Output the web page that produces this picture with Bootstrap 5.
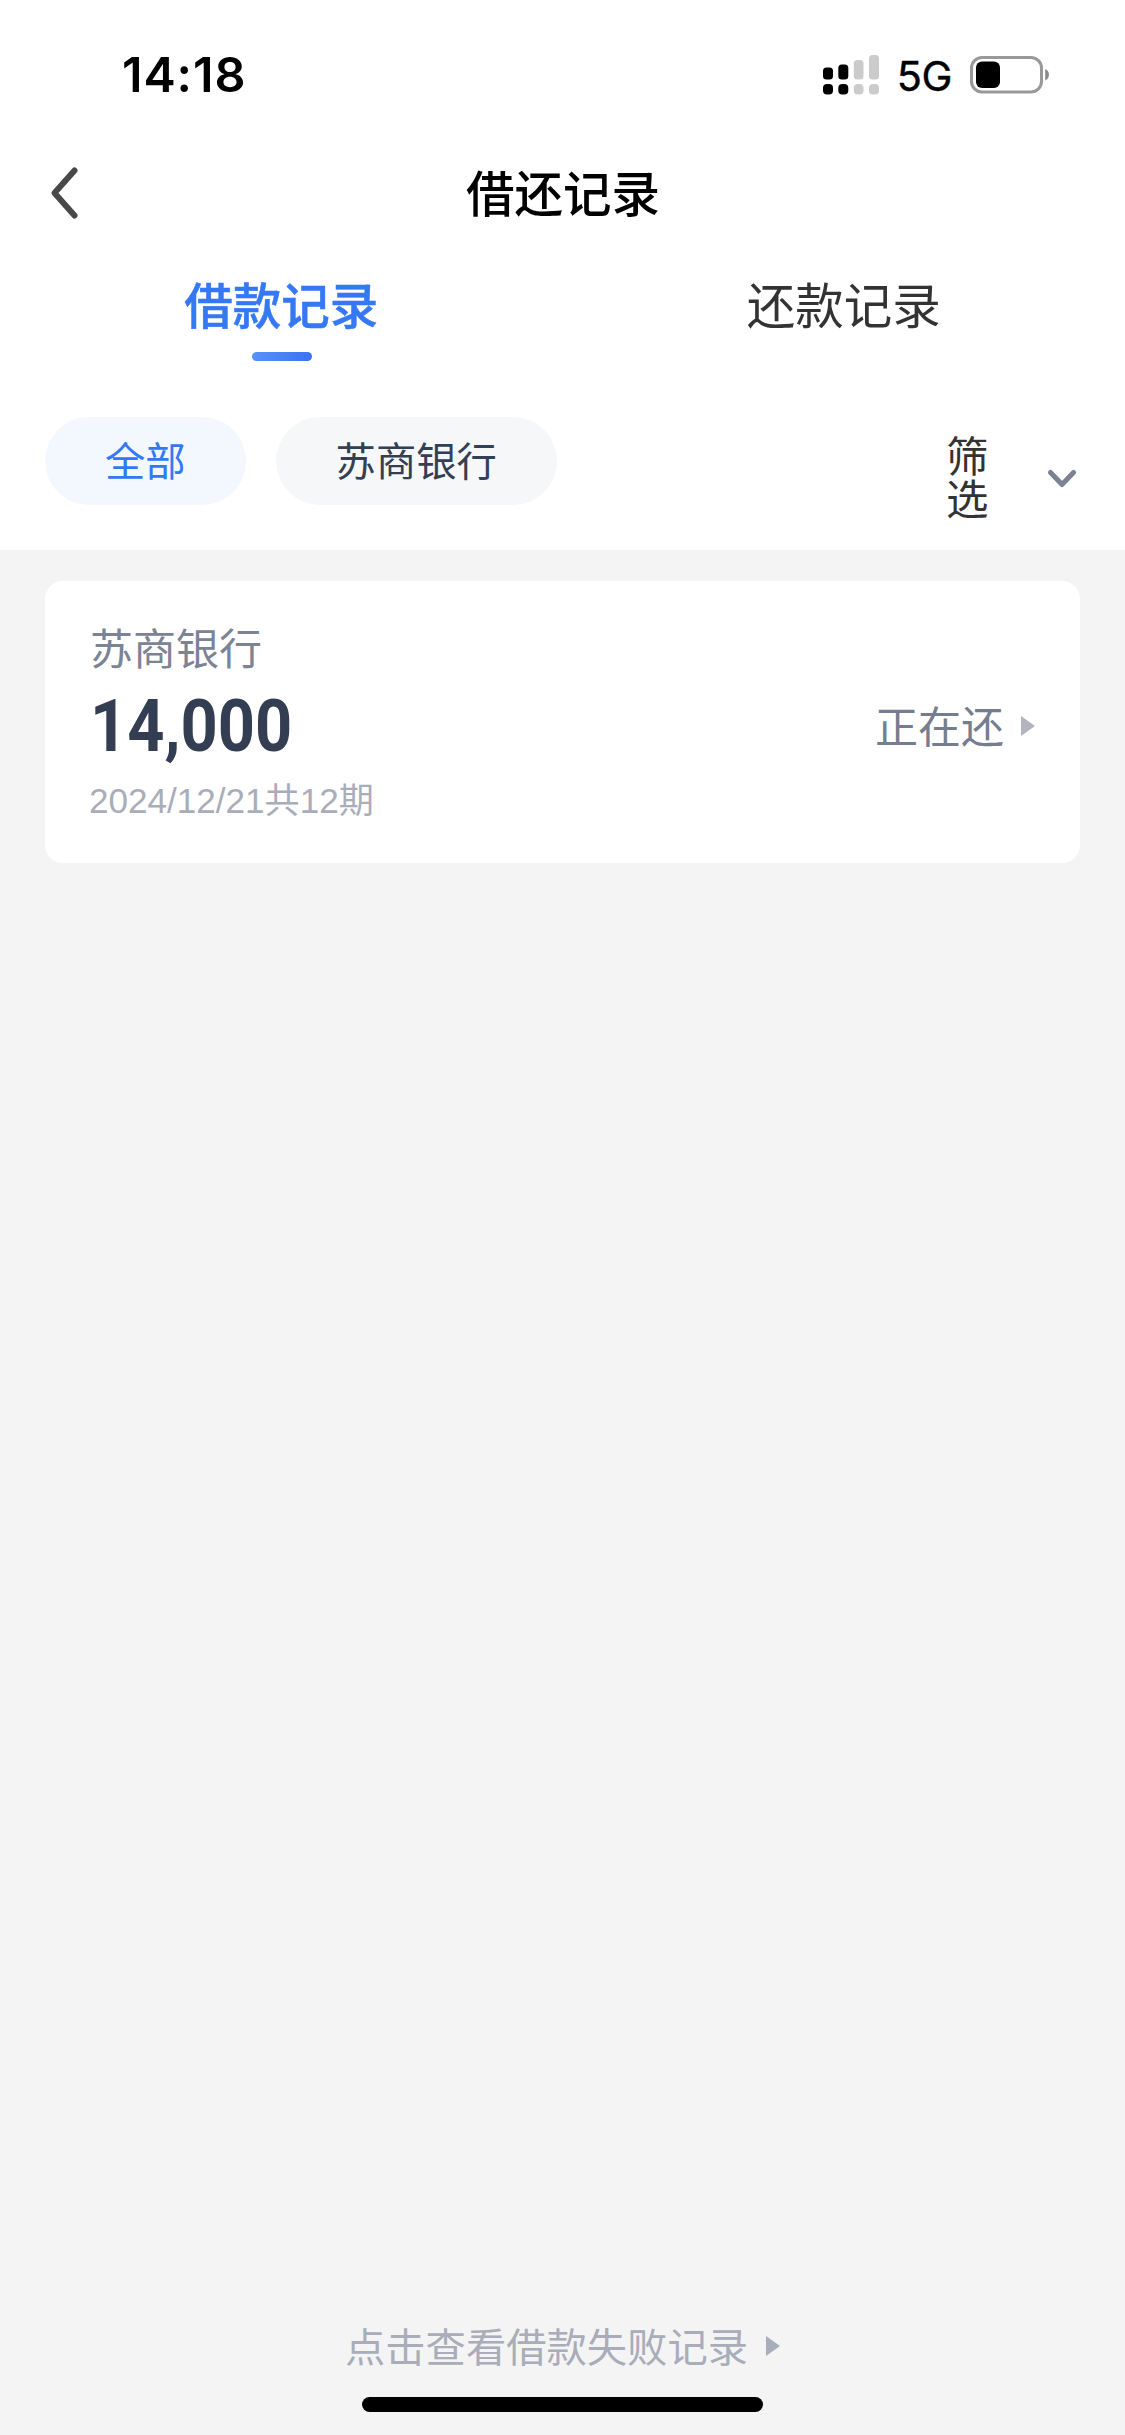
<!DOCTYPE html>
<html lang="zh-CN">
<head>
<meta charset="utf-8">
<meta name="viewport" content="width=device-width, initial-scale=1">
<title>借还记录</title>
<link href="https://cdn.jsdelivr.net/npm/bootstrap@5.3.0/dist/css/bootstrap.min.css" rel="stylesheet">
<style>
body{font-family:"Noto Sans CJK SC",sans-serif;background:#f4f4f4;color:#333;line-height:1}
svg{display:block;flex:none}
.screen{height:2435px}
.head-area{height:550px}
.status{height:150px;padding:0 75px 0 122px}
.clock{font:600 48.5px/1 Inter,sans-serif;color:#000;letter-spacing:.9px;padding-top:1px}
.net{font:400 41.5px/1 Inter,sans-serif;-webkit-text-stroke:.4px #000;color:#000;letter-spacing:-.5px;margin:3px 18px 0 18px}
.titlebar{height:86px;padding:0 49px 0 50px}
.page-title{font-size:48.5px;font-weight:500;color:#000;line-height:82px;height:86px}
.side{width:30px}
.tabs-row{height:140px}
.tab-btn{font-size:48.5px;line-height:60px;padding-top:37px;color:#333}
.tab-on{font-weight:500;-webkit-text-stroke:.5px #3478f6;color:#3478f6}
.tab-line{width:60px;height:9px;border-radius:5px;margin:19px 0 0 2px;background:linear-gradient(100deg,#5693f9,#3b71f1)}
.filters{padding:41px 45px 0;gap:30px}
.pill{height:88px;border-radius:44px;padding:0 60px;font-size:40.3px;line-height:84px;background:#f6f7f9;color:#343f54}
.pill-on{background:#f3f7fe;color:#3478f6}
.pick{padding:15px 3px 0 0;gap:58px}
.pick-text{width:43px;font-size:42.5px;line-height:43px}
.pick svg{margin-top:7px}
.loan{margin:31px 45px 0;height:282px;border-radius:18px;padding:0 45px 0 45px}
.bank{font-size:43px;line-height:60px;color:#7c8394;padding-top:35px}
.amount{font:700 73px/72px Roboto,sans-serif;color:#333e53;transform:scaleX(.89);transform-origin:left;margin-top:14px}
.due{font-family:"Liberation Sans","Noto Sans CJK SC",sans-serif;font-size:35.1px;line-height:44px;color:#a9adba;margin:17px 0 0 -1px}
.state{font-size:43px;line-height:60px;color:#757d90;gap:17px;padding-top:4px}
.state svg{margin-top:4px}
.failed{font-size:40.3px;line-height:60px;color:#a9adb9;gap:18px;margin-bottom:22px}
.failed svg{margin-top:2px}
.homebar{width:401px;height:15px;border-radius:8px;background:#000;margin-bottom:23px}
</style>
</head>
<body>
<div class="screen d-flex flex-column">
  <header class="head-area bg-white">
    <div class="status d-flex align-items-center justify-content-between">
      <span class="clock">14:18</span>
      <div class="d-flex align-items-center">
        <svg width="56" height="40" viewBox="0 0 56 40"><g fill="#000"><rect y="12.500" width="10" height="12" rx="3.500"/><rect y="29" width="10" height="10.500" rx="4"/><rect x="15.300" y="9.500" width="10" height="15" rx="3.500"/><rect x="15.300" y="29" width="10" height="10.500" rx="4"/></g><g fill="#cbcbcb"><rect x="30.800" y="5" width="9.700" height="19.500" rx="3.500"/><rect x="30.800" y="29" width="9.700" height="10.500" rx="4"/><rect x="46" y="0" width="10" height="24.500" rx="3.500"/><rect x="46" y="29" width="10" height="10.500" rx="4"/></g></svg>
        <span class="net">5G</span>
        <svg width="80" height="38" viewBox="0 0 80 38"><rect x="1.500" y="1.500" width="70" height="34.500" rx="10.500" fill="none" stroke="#999" stroke-width="3"/><rect x="6" y="5.500" width="24" height="26.500" rx="6" fill="#000"/><path d="M75.200 13c5 2 5 9.500 0 11.500z" fill="#8c8c8c"/></svg>
      </div>
    </div>
    <nav class="titlebar d-flex align-items-center justify-content-between">
      <svg class="side" width="30" height="54" viewBox="0 0 30 54"><path d="M24.500 4.500 4.500 27l20 22.500" fill="none" stroke="#484848" stroke-width="6" stroke-linecap="round" stroke-linejoin="round"/></svg>
      <div class="page-title">借还记录</div>
      <span class="side"></span>
    </nav>
    <div class="tabs-row row g-0">
      <div class="col-6 d-flex flex-column align-items-center"><div class="tab-btn tab-on">借款记录</div><div class="tab-line"></div></div>
      <div class="col-6 text-center"><div class="tab-btn">还款记录</div></div>
    </div>
    <div class="filters d-flex align-items-start">
      <div class="pill pill-on">全部</div>
      <div class="pill">苏商银行</div>
      <div class="pick d-flex align-items-center ms-auto">
        <div class="pick-text">筛选</div>
        <svg width="30" height="20" viewBox="0 0 30 20"><path d="m3.500 3.500 11.500 12 11.500-12" fill="none" stroke="#7b8292" stroke-width="5" stroke-linecap="round" stroke-linejoin="round"/></svg>
      </div>
    </div>
  </header>
  <main class="loan bg-white d-flex align-items-center justify-content-between">
    <div class="align-self-start">
      <div class="bank">苏商银行</div>
      <div class="amount">14,000</div>
      <div class="due">2024/12/21共12期</div>
    </div>
    <div class="state d-flex align-items-center">正在还<svg width="14" height="20" viewBox="0 0 14 20"><path d="M0 0v20l14-10z" fill="#b0b5bf"/></svg></div>
  </main>
  <footer class="mt-auto d-flex flex-column align-items-center">
    <div class="failed d-flex align-items-center">点击查看借款失败记录<svg width="14" height="20" viewBox="0 0 14 20"><path d="M0 0v20l14-10z" fill="#a9afba"/></svg></div>
    <div class="homebar"></div>
  </footer>
</div>
<script src="https://cdn.jsdelivr.net/npm/bootstrap@5.3.0/dist/js/bootstrap.bundle.min.js"></script>
</body>
</html>
